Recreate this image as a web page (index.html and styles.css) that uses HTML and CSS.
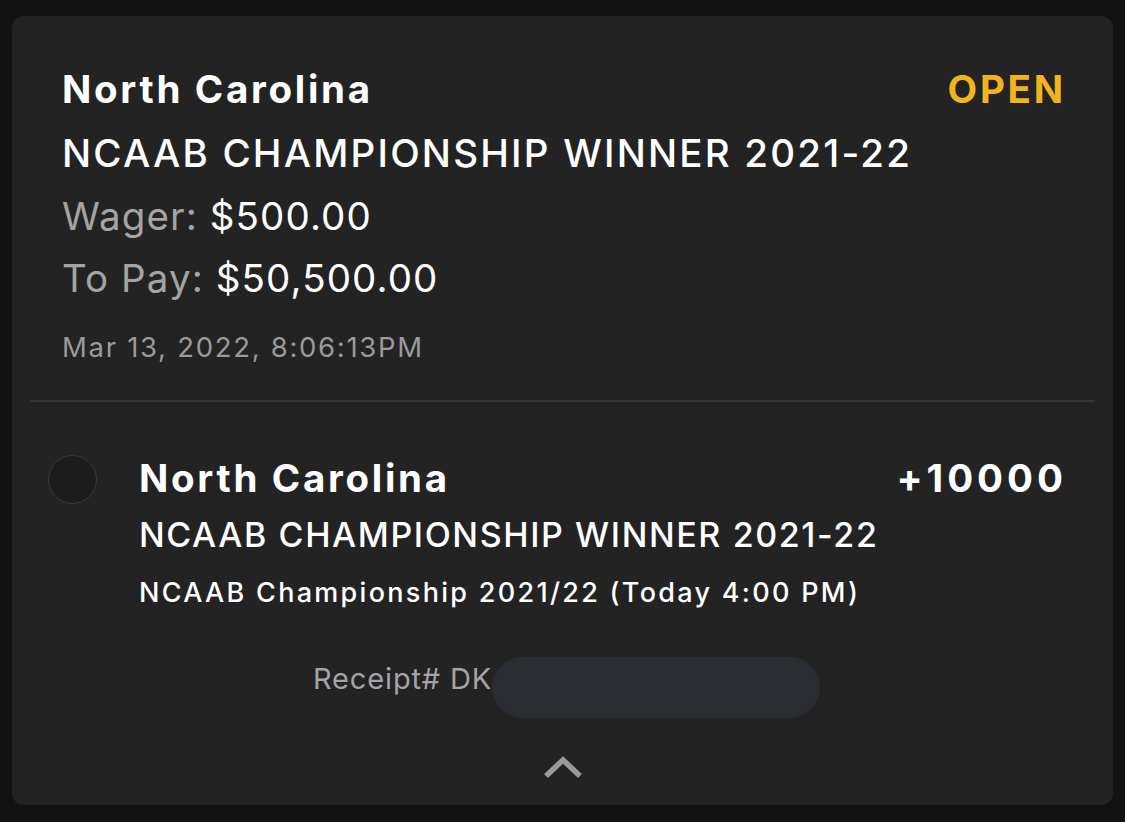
FILE: index.html
```html
<!DOCTYPE html>
<html>
<head>
    <title>Bet Receipt</title>
    <meta charset="UTF-8">
    <link rel="stylesheet" href="styles.css">
</head>
<body>
    <div class="card">
        <div class="summary">
            <div class="row">
                <span class="team">North Carolina</span>
                <span class="status">OPEN</span>
            </div>
            <div class="market">NCAAB CHAMPIONSHIP WINNER 2021-22</div>
            <div class="money wager"><span class="label">Wager:</span> $500.00</div>
            <div class="money pay"><span class="label">To Pay:</span> $50,500.00</div>
            <div class="date">Mar 13, 2022, 8:06:13PM</div>
        </div>
        <hr class="divider">
        <div class="leg">
            <div class="dot"></div>
            <div class="leg-body">
                <div class="row">
                    <span class="team">North Carolina</span>
                    <span class="odds">+10000</span>
                </div>
                <div class="leg-market">NCAAB CHAMPIONSHIP WINNER 2021-22</div>
                <div class="leg-event">NCAAB Championship 2021/22 (Today 4:00 PM)</div>
            </div>
        </div>
        <div class="receipt">
            <span class="receipt-text">Receipt# DK</span>
            <span class="blur"></span>
        </div>
        <div class="toggle">
            <svg width="42" height="28" viewBox="0 0 42 28">
                <path d="M4 24 L21 8 L38 24" fill="none" stroke="#9a9a9a" stroke-width="5.5"/>
            </svg>
        </div>
    </div>
</body>
</html>
```

FILE: styles.css
```css
body {
    margin: 0;
    background: #121212;
    font-family: Inter, "Noto Sans", sans-serif;
    color: #fff;
}
.card {
    margin: 16px 12px 0 12px;
    height: 789px;
    background: #232323;
    border-radius: 12px;
    overflow: hidden;
}
.summary {
    padding: 50px 50px 0 50px;
}
.row {
    display: flex;
    justify-content: space-between;
    align-items: baseline;
    height: 46px;
}
.team {
    font-size: 38.5px;
    line-height: 46px;
    font-weight: 700;
    letter-spacing: 2.7px;
}
.status {
    font-size: 38.5px;
    line-height: 46px;
    font-weight: 700;
    letter-spacing: 2.7px;
    margin-right: -2.7px;
    color: #f0b41c;
}
.market {
    font-size: 38.5px;
    line-height: 46px;
    font-weight: 500;
    letter-spacing: 2.2px;
    margin-top: 18px;
}
.money {
    font-size: 38.5px;
    line-height: 46px;
    letter-spacing: 1.1px;
}
.wager {
    margin-top: 17px;
}
.pay {
    margin-top: 16px;
}
.label {
    color: #a4a4a4;
}
.date {
    font-size: 27.5px;
    line-height: 34px;
    letter-spacing: 1.7px;
    color: #9a9a9a;
    margin-top: 29px;
}
.divider {
    border: none;
    border-top: 2px solid #363636;
    margin: 36px 18px 0 18px;
}
.leg {
    display: flex;
    padding: 53px 50px 0 36px;
}
.dot {
    width: 47px;
    height: 47px;
    border: 1.5px solid #3a3a3a;
    background: #1c1c1c;
    border-radius: 50%;
    flex: none;
}
.leg-body {
    flex: 1;
    margin-left: 42px;
}
.odds {
    font-size: 38.5px;
    line-height: 46px;
    font-weight: 700;
    letter-spacing: 4px;
    margin-right: -4px;
}
.leg-market {
    font-size: 34px;
    line-height: 40px;
    font-weight: 500;
    letter-spacing: 1.6px;
    margin-top: 14px;
}
.leg-event {
    font-size: 27px;
    line-height: 32px;
    font-weight: 500;
    letter-spacing: 2.3px;
    margin-top: 22px;
}
.receipt {
    display: flex;
    align-items: flex-start;
    padding-left: 301px;
    margin-top: 48px;
}
.receipt-text {
    font-size: 29px;
    line-height: 35px;
    letter-spacing: 0.85px;
    color: #a4a4a4;
    margin-top: 4px;
}
.blur {
    width: 328px;
    height: 61px;
    border-radius: 31px;
    background: #2a2e33;
}
.toggle {
    display: flex;
    justify-content: center;
    margin-top: 34px;
}
```
